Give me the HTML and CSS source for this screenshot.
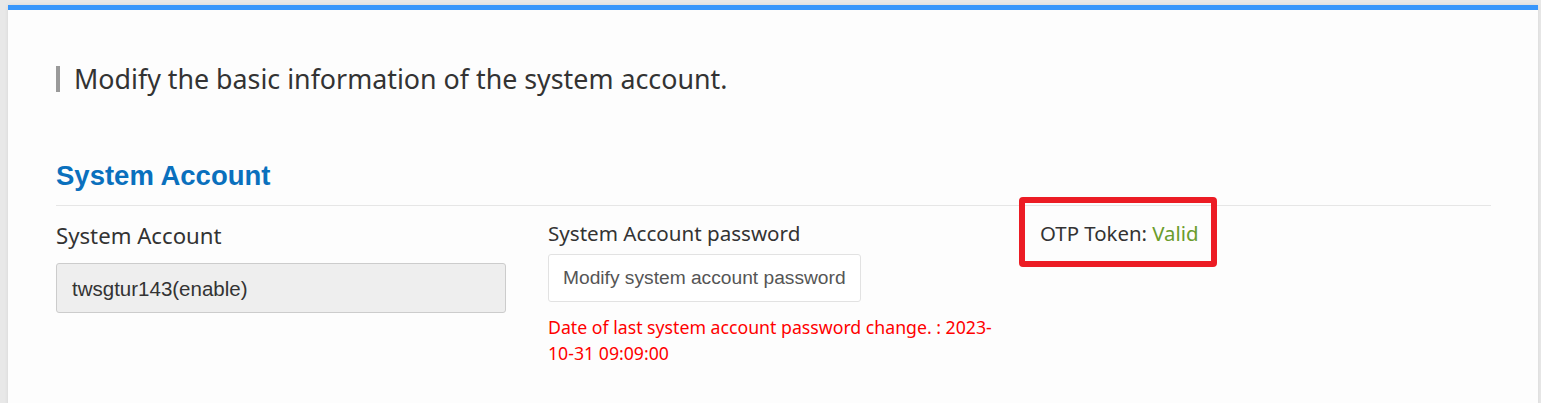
FILE: index.html
```html
<!DOCTYPE html>
<html lang="en">
<head>
<meta charset="utf-8">
<title>System Account</title>
<link rel="stylesheet" href="styles.css">
</head>
<body>
<div class="card">
  <h2 class="page-title">Modify the basic information of the system account.</h2>
  <h3 class="section-title">System Account</h3>
  <div class="form-row">
    <div class="field">
      <label class="label">System Account</label>
      <div class="readonly">twsgtur143(enable)</div>
    </div>
    <div class="field field-pw">
      <label class="label">System Account password</label>
      <button class="btn-pw" type="button">Modify system account password</button>
      <p class="note">Date of last system account password change. : 2023-10-31 09:09:00</p>
    </div>
    <div class="field field-otp">
      <span class="otp">OTP Token: <span class="valid">Valid</span></span>
    </div>
  </div>
</div>
</body>
</html>
```
FILE: styles.css
```css
html, body {
  margin: 0;
  padding: 0;
}
body {
  background: #e8e8e8;
  padding: 5px 3px 0 8px;
  height: 398px;
  overflow: hidden;
}
.card {
  background: #fdfdfd;
  border-top: 5px solid #3896fb;
  padding: 56px 48px 40px 48px;
  min-height: 400px;
  box-shadow: 0 0 4px rgba(0,0,0,0.08);
}
.page-title {
  margin: 0;
  border-left: 4px solid #9a9a9a;
  padding-left: 14px;
  font-family: "Noto Sans", sans-serif;
  font-weight: 400;
  font-size: 26.8px;
  line-height: 26px;
  color: #333;
}
.section-title {
  margin: 68px 0 0 0;
  font-family: "Liberation Sans", Arial, sans-serif;
  font-weight: 700;
  font-size: 27.5px;
  line-height: 32px;
  color: #0a70bd;
  padding-bottom: 13px;
  border-bottom: 1px solid #e6e6e6;
  margin-right: -1px;
}
.form-row {
  display: grid;
  grid-template-columns: 450px 450px 1fr;
  column-gap: 42px;
  padding-top: 13px;
}
.field {
  display: flex;
  flex-direction: column;
  align-items: flex-start;
}
.label {
  font-family: "Noto Sans", sans-serif;
  font-size: 22.2px;
  line-height: 30px;
  color: #333;
  margin-top: 2px;
}
.readonly {
  box-sizing: border-box;
  width: 450px;
  height: 50px;
  margin-top: 12px;
  background: #eee;
  border: 1px solid #ccc;
  border-radius: 3px;
  padding: 0 15px;
  font-family: "Liberation Sans", Arial, sans-serif;
  font-size: 20.5px;
  line-height: 50px;
  color: #333;
}
.field-pw .label {
  margin-top: -1px;
  font-size: 20.6px;
}
.btn-pw {
  box-sizing: border-box;
  height: 48px;
  margin-top: 6px;
  background: #fff;
  border: 1px solid #e2e2e2;
  border-radius: 3px;
  padding: 0 14px;
  font-family: "Liberation Sans", Arial, sans-serif;
  font-size: 19.2px;
  color: #555;
}
.note {
  margin: 12px 0 0 0;
  font-family: "Noto Sans", sans-serif;
  font-size: 17.7px;
  line-height: 26px;
  color: #f00;
}
.otp {
  position: relative;
  margin-top: -1px;
  font-family: "Noto Sans", sans-serif;
  font-size: 20.4px;
  line-height: 30px;
  color: #333;
}
.valid {
  color: #6a9c2c;
}
.otp::after {
  content: "";
  position: absolute;
  left: -21px;
  top: -21px;
  width: 198px;
  height: 70px;
  box-sizing: border-box;
  border: 6px solid #ec1c24;
  border-radius: 4px;
}
```
